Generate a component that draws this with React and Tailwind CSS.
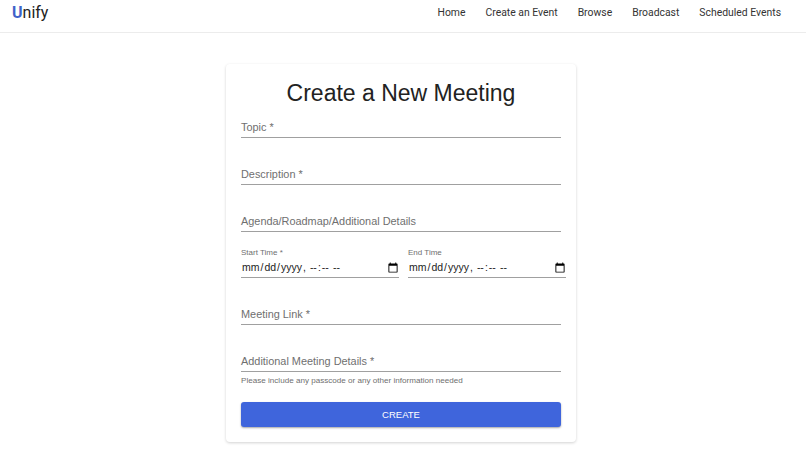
import React from 'react';

const navLinks = ['Home', 'Create an Event', 'Browse', 'Broadcast', 'Scheduled Events'];

function Field({ label, required, className = '' }) {
  return (
    <div className={`flex h-[47px] flex-col justify-end ${className}`}>
      <label className="border-b border-[#a0a0a0] pb-[1px] text-[10.9px] leading-[17px] text-[#6f6f6f]">
        {label}
        {required && ' *'}
      </label>
    </div>
  );
}

function DateField({ label, required }) {
  return (
    <div className="w-[158px] shrink-0">
      <label className="block text-[8px] leading-[12px] text-[#6f6f6f]">
        {label}
        {required && ' *'}
      </label>
      <input
        type="datetime-local"
        className="block h-[19px] w-full border-b border-[#a0a0a0] pb-[1px] text-[10.5px] text-[#222] outline-none [&::-webkit-calendar-picker-indicator]:mr-[-2px] [&::-webkit-calendar-picker-indicator]:h-[12px] [&::-webkit-calendar-picker-indicator]:w-[12px]"
      />
    </div>
  );
}

export default function App() {
  return (
    <div className="min-h-[452px] bg-white font-['Liberation_Sans',sans-serif]">
      <header className="flex h-[33px] items-start justify-between border-b border-[#ececec] pl-[12px] pr-[25px]">
        <div className="font-['Roboto',sans-serif] text-[16px] leading-[25px] text-[#222]">
          <span className="font-bold text-[#3f62c9]">U</span>nify
        </div>
        <nav className="flex gap-[20px] pt-[5px] font-['Roboto',sans-serif] text-[10.4px] leading-[15px] text-[#333]">
          {navLinks.map((link) => (
            <a key={link} href="#">{link}</a>
          ))}
        </nav>
      </header>

      <main className="flex justify-center pr-[4px] pt-[31px]">
        <form className="h-[378px] w-[350px] rounded-[4px] bg-white px-[15px] shadow-[0_1px_3px_rgba(0,0,0,0.18)]">
          <h1 className="pt-[14px] text-center text-[23px] leading-[30px] text-[#222]">Create a New Meeting</h1>
          <Field label="Topic" required className="!h-[30px]" />
          <Field label="Description" required />
          <Field label="Agenda/Roadmap/Additional Details" />
          <div className="mt-[15px] flex w-[325px] gap-[9px]">
            <DateField label="Start Time" required />
            <DateField label="End Time" />
          </div>
          <Field label="Meeting Link" required />
          <Field label="Additional Meeting Details" required />
          <p className="mt-[3px] text-[8.1px] leading-[12px] text-[#6f6f6f]">
            Please include any passcode or any other information needed
          </p>
          <button
            type="button"
            className="mt-[15px] h-[25px] w-full rounded-[3px] bg-[#3f65dc] pt-[1px] text-[9.5px] text-white shadow-[0_1px_2px_rgba(0,0,0,0.35)]"
          >
            CREATE
          </button>
        </form>
      </main>
    </div>
  );
}
